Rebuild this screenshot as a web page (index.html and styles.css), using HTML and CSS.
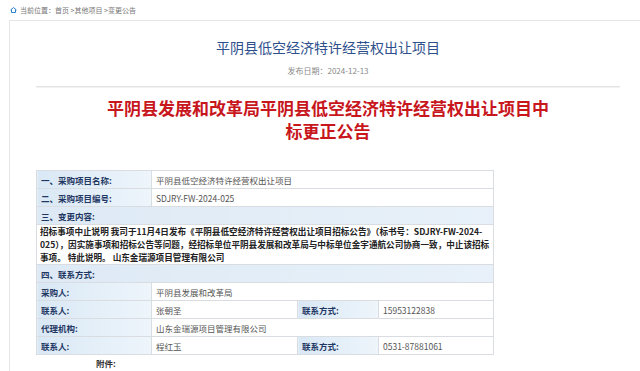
FILE: index.html
```html
<!DOCTYPE html>
<html lang="zh-CN">
<head>
  <meta charset="UTF-8" />
  <meta name="viewport" content="width=device-width, initial-scale=1.0"/>
  <title>变更公告</title>
  <link rel="stylesheet" href="styles.css">
</head>
<body>
  <div class="crumb">
    <svg class="home" width="7" height="6" viewBox="0 0 7 6">
      <path d="M0.5 3 L3.5 0.6 L6.5 3 M1.5 2.4 V5.5 H5.5 V2.4" fill="none" stroke="#2f7fd0" stroke-width="1"/>
    </svg>
    <span>当前位置：首页 &gt;其他项目 &gt;变更公告</span>
  </div>

  <div class="panel">
    <h2 class="title">平阴县低空经济特许经营权出让项目</h2>
    <div class="date">发布日期：2024-12-13</div>
    <div class="sep"></div>

    <h1 class="headline">平阴县发展和改革局平阴县低空经济特许经营权出让项目中<br>标更正公告</h1>

    <table class="info">
      <colgroup>
        <col class="c1"><col class="c2"><col class="c3"><col class="c4">
      </colgroup>
      <tr>
        <td class="label">一、采购项目名称:</td>
        <td colspan="3">平阴县低空经济特许经营权出让项目</td>
      </tr>
      <tr>
        <td class="label">二、采购项目编号:</td>
        <td colspan="3">SDJRY-FW-2024-025</td>
      </tr>
      <tr>
        <td class="label head" colspan="4">三、变更内容:</td>
      </tr>
      <tr>
        <td class="body" colspan="4">招标事项中止说明 我司于11月4日发布《平阴县低空经济特许经营权出让项目招标公告》（标书号：SDJRY-FW-2024-025），因实施事项和招标公告等问题，经招标单位平阴县发展和改革局与中标单位金宇通航公司协商一致，中止该招标事项。 特此说明。 山东金瑞源项目管理有限公司</td>
      </tr>
      <tr>
        <td class="label head" colspan="4">四、联系方式:</td>
      </tr>
      <tr>
        <td class="label">采购人:</td>
        <td colspan="3">平阴县发展和改革局</td>
      </tr>
      <tr>
        <td class="label">联系人:</td>
        <td>张朝圣</td>
        <td class="label">联系方式:</td>
        <td>15953122838</td>
      </tr>
      <tr>
        <td class="label">代理机构:</td>
        <td colspan="3">山东金瑞源项目管理有限公司</td>
      </tr>
      <tr>
        <td class="label">联系人:</td>
        <td>程红玉</td>
        <td class="label">联系方式:</td>
        <td>0531-87881061</td>
      </tr>
    </table>

    <div class="attach">附件:</div>
  </div>
</body>
</html>
```

FILE: styles.css
```css
html, body {
  overflow: hidden;
}

body {
  margin: 0;
  background: #fff;
  font-family: "Microsoft YaHei", "Noto Sans CJK SC", sans-serif;
  color: #333;
}

.crumb {
  height: 20px;
  display: flex;
  align-items: center;
  gap: 3px;
  padding-left: 10px;
  font-size: 7px;
  color: #777;
}

.panel {
  margin-left: 9px;
  width: 584px;
  height: 350px;
  padding: 0 25px 0 26px;
  border-left: 1px solid #e6e6e6;
  border-top: 1px solid #e6e6e6;
}

.title {
  margin: 0;
  padding-top: 16px;
  font-size: 14px;
  line-height: 20px;
  font-weight: normal;
  text-align: center;
  color: #2e4f8c;
}

.date {
  margin-top: 7px;
  font-size: 8px;
  line-height: 14px;
  text-align: center;
  color: #888;
}

.sep {
  margin-top: 8px;
  border-top: 1px solid #e2e2e2;
  box-shadow: 0 1px 1px #f0f0f0;
}

.headline {
  margin: 9px 0 0;
  font-size: 17px;
  line-height: 23px;
  font-weight: bold;
  text-align: center;
  color: #c8161d;
}

.info {
  margin-top: 28px;
  width: 457px;
  border-collapse: collapse;
  table-layout: fixed;
  font-size: 8.5px;
}

.info .c1 { width: 115px; }
.info .c2 { width: 146px; }
.info .c3 { width: 81px; }
.info .c4 { width: 115px; }

.info td {
  height: 17px;
  padding: 0 4px;
  border: 1px solid #d9dde2;
  color: #555;
  white-space: nowrap;
}

.info td.label {
  background: linear-gradient(to right, #d9e8f5, #eef5fb);
  color: #1f3763;
  font-weight: bold;
}

.info td.head {
  background: linear-gradient(to right, #dde9f5, #e8f1f9);
}

.info td.body {
  height: auto;
  padding: 0 2px 0 3px;
  white-space: normal;
  font-size: 8.6px;
  line-height: 13px;
  color: #222;
  font-weight: bold;
}

.attach {
  margin-top: 2px;
  padding-left: 60px;
  font-size: 8.5px;
  font-weight: bold;
  color: #333;
}
```
